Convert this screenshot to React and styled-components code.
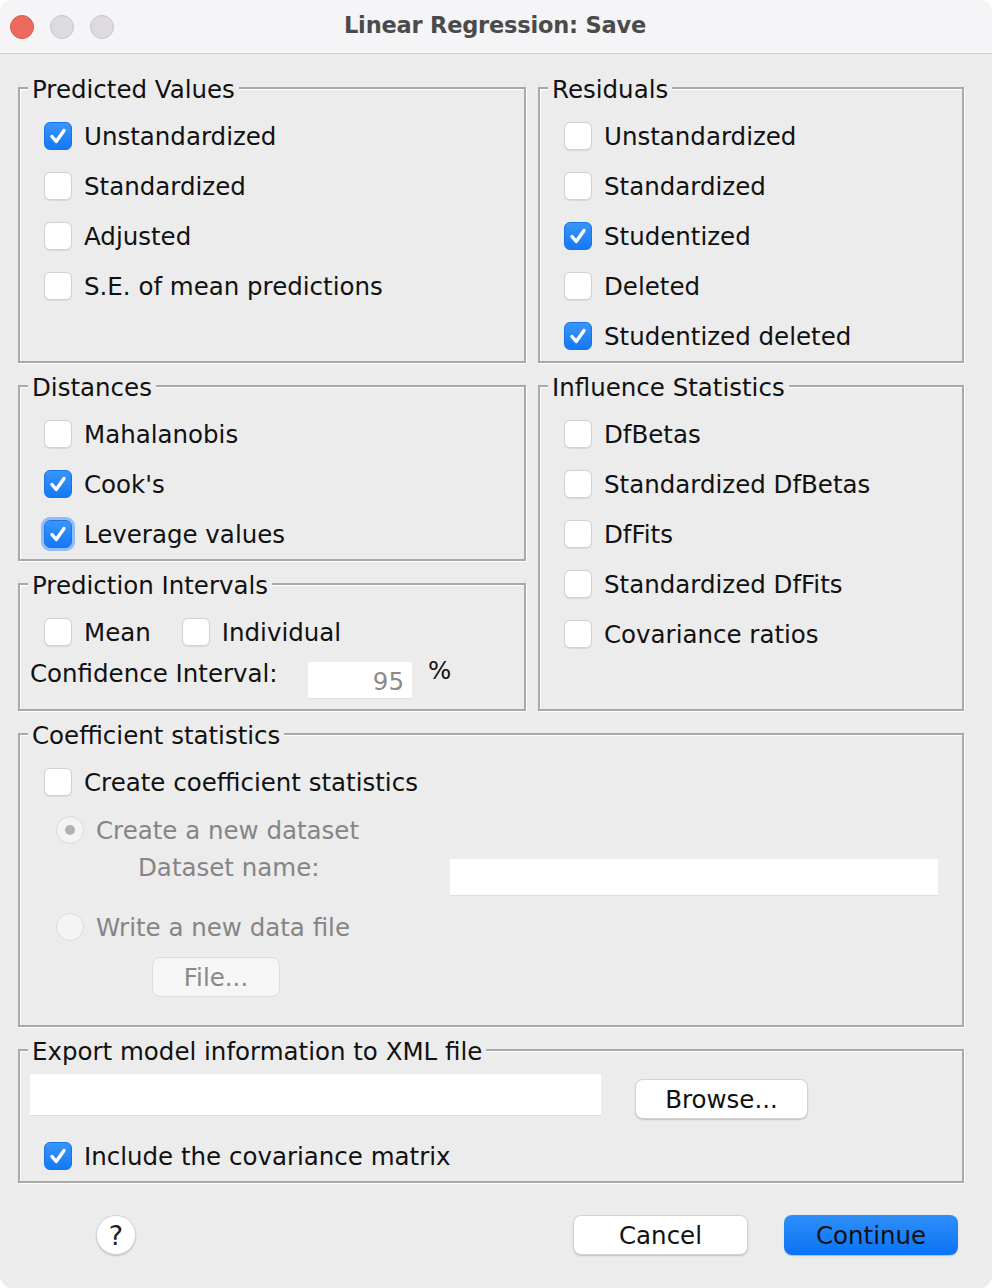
import React from 'react'
import styled, { createGlobalStyle, css } from 'styled-components'

const GlobalStyle = createGlobalStyle`
  html, body {
    margin: 0;
    padding: 0;
    background: #ffffff;
  }
  body {
    font-family: 'DejaVu Sans', 'Liberation Sans', sans-serif;
    color: #111111;
  }
`

const Window = styled.div`
  width: 992px;
  height: 1288px;
  box-sizing: border-box;
  background: #ececec;
  border-radius: 12px;
  overflow: hidden;
  display: flex;
  flex-direction: column;
`

const TitleBar = styled.div`
  height: 54px;
  flex-shrink: 0;
  background: #f5f4f6;
  border-bottom: 1px solid #cdcdcd;
  display: flex;
  align-items: center;
  padding-left: 10px;
  padding-bottom: 3px;
  box-sizing: border-box;
`

const Lights = styled.div`
  display: flex;
  gap: 16px;
  margin-top: 3px;
`

const Light = styled.span`
  width: 22px;
  height: 22px;
  border-radius: 50%;
  background: ${props => props.color};
  border: 1px solid ${props => props.edge};
`

const Title = styled.div`
  flex: 1;
  text-align: center;
  margin-right: 116px;
  font-size: 22.5px;
  font-weight: bold;
  color: #4b4b4b;
  letter-spacing: -0.2px;
`

const Body = styled.div`
  padding: 20px 28px 0 18px;
  display: grid;
  grid-template-columns: 508px 426px;
  grid-template-areas:
    'pred resid'
    'dist infl'
    'pint infl'
    'coef coef'
    'xml xml';
  column-gap: 12px;
  row-gap: 9px;
`

const Group = styled.fieldset`
  grid-area: ${props => props.area};
  margin: 0;
  padding: 9px 10px 0 10px;
  min-width: 0;
  border: 2px solid #a9a9a9;
  box-shadow: inset 1px 1px 0 #ffffff, 1px 1px 0 #ffffff;
  display: flex;
  flex-direction: column;
  padding-bottom: ${props => props.bottom || '0'};
`

const Legend = styled.legend`
  margin-left: -2px;
  padding: 4px 4px 0;
  box-sizing: border-box;
  height: 28px;
  line-height: 24px;
  font-size: 24.5px;
  background: #ececec;
  color: #111111;
`

const Row = styled.div`
  display: flex;
  align-items: center;
  height: ${props => props.height || '50px'};
  margin-left: ${props => props.indent || '14px'};
  gap: 12px;
  font-size: 24.5px;
  color: ${props => (props.disabled ? '#858585' : '#111111')};
`

const Box = styled.span`
  width: 28px;
  height: 28px;
  box-sizing: border-box;
  border-radius: 6px;
  flex-shrink: 0;
  display: flex;
  align-items: center;
  justify-content: center;
  ${props =>
    props.checked
      ? css`
          background: linear-gradient(#3a95fb, #1479f6);
          border: 1px solid #1a74e8;
        `
      : css`
          background: #ffffff;
          border: 1px solid #d2d2d2;
          box-shadow: 0 0.5px 1px rgba(0, 0, 0, 0.08);
        `}
  ${props =>
    props.focus &&
    css`
      box-shadow: 0 0 0 3px rgba(74, 150, 250, 0.55);
    `}
`

const Radio = styled.span`
  width: 28px;
  height: 28px;
  box-sizing: border-box;
  border-radius: 50%;
  background: #f4f4f4;
  border: 1px solid #dadada;
  flex-shrink: 0;
  display: flex;
  align-items: center;
  justify-content: center;
  &::after {
    content: '';
    width: 10px;
    height: 10px;
    border-radius: 50%;
    background: ${props => (props.selected ? '#b2b2b2' : 'transparent')};
  }
`

const Gap = styled.span`
  width: ${props => props.width};
  flex-shrink: 0;
`

const Field = styled.div`
  width: ${props => props.width};
  height: ${props => props.height || '37px'};
  margin-top: ${props => props.top || '0'};
  box-sizing: border-box;
  background: #ffffff;
  border-bottom: 1px solid #dedede;
  flex-shrink: 0;
  font-size: 24.5px;
  color: #8a8a8a;
  text-align: right;
  padding-right: 8px;
  line-height: 40px;
`

const FieldLabel = styled.span`
  width: ${props => props.width};
  flex-shrink: 0;
  font-size: 24.5px;
  line-height: ${props => props.lineHeight || 'normal'};
  color: ${props => (props.disabled ? '#858585' : '#111111')};
`

const FlatRow = styled.div`
  display: flex;
  align-items: ${props => props.align || 'center'};
  height: ${props => props.height};
  margin-left: ${props => props.indent || '0'};
  margin-top: ${props => props.top || '0'};
`

const Percent = styled.span`
  font-size: 24.5px;
  line-height: 28px;
  margin-left: 16px;
`

const Button = styled.button`
  width: ${props => props.width};
  height: 40px;
  margin-top: ${props => props.top || '0'};
  margin-left: ${props => props.left || '0'};
  border-radius: 8px;
  font-family: inherit;
  font-size: 24.5px;
  flex-shrink: 0;
  padding: 0;
  ${props =>
    props.primary
      ? css`
          background: linear-gradient(#2e8ff9, #0a73f6);
          border: none;
          color: #111111;
          box-shadow: 0 0.5px 1px rgba(0, 0, 0, 0.2);
        `
      : props.disabled
      ? css`
          background: #f6f6f6;
          border: 1px solid #dcdcdc;
          color: #8a8a8a;
        `
      : css`
          background: #ffffff;
          border: 1px solid #d3d3d3;
          color: #111111;
          box-shadow: 0 1px 1.5px rgba(0, 0, 0, 0.18);
        `}
`

const Footer = styled.div`
  display: flex;
  align-items: center;
  padding: 32px 34px 0 96px;
`

const Help = styled.button`
  width: 40px;
  height: 40px;
  border-radius: 50%;
  background: #ffffff;
  border: 1px solid #d5d5d5;
  box-shadow: 0 1px 1.5px rgba(0, 0, 0, 0.18);
  font-family: inherit;
  font-size: 27px;
  color: #222222;
  padding: 0;
  margin-right: auto;
`

const Actions = styled.div`
  display: flex;
  gap: 36px;
`

function Check({ checked, focus }) {
  return (
    <Box checked={checked} focus={focus}>
      {checked && (
        <svg width="22" height="22" viewBox="0 0 22 22">
          <path
            d="M5 11.5 L9.2 16.5 L17 5.5"
            fill="none"
            stroke="#ffffff"
            strokeWidth="3.4"
            strokeLinecap="round"
            strokeLinejoin="round"
          />
        </svg>
      )}
    </Box>
  )
}

function Option({ label, checked, focus }) {
  return (
    <Row>
      <Check checked={checked} focus={focus} />
      <span>{label}</span>
    </Row>
  )
}

export default function App() {
  return (
    <>
      <GlobalStyle />
      <Window>
        <TitleBar>
          <Lights>
            <Light color="#ec6a5e" edge="#d55b50" />
            <Light color="#dddbde" edge="#c8c6c9" />
            <Light color="#dddbde" edge="#c8c6c9" />
          </Lights>
          <Title>Linear Regression: Save</Title>
        </TitleBar>
        <Body>
          <Group area="pred">
            <Legend>Predicted Values</Legend>
            <Option label="Unstandardized" checked />
            <Option label="Standardized" />
            <Option label="Adjusted" />
            <Option label="S.E. of mean predictions" />
          </Group>
          <Group area="resid">
            <Legend>Residuals</Legend>
            <Option label="Unstandardized" />
            <Option label="Standardized" />
            <Option label="Studentized" checked />
            <Option label="Deleted" />
            <Option label="Studentized deleted" checked />
          </Group>
          <Group area="dist">
            <Legend>Distances</Legend>
            <Option label="Mahalanobis" />
            <Option label="Cook's" checked />
            <Option label="Leverage values" checked focus />
          </Group>
          <Group area="infl">
            <Legend>Influence Statistics</Legend>
            <Option label="DfBetas" />
            <Option label="Standardized DfBetas" />
            <Option label="DfFits" />
            <Option label="Standardized DfFits" />
            <Option label="Covariance ratios" />
          </Group>
          <Group area="pint" bottom="6px">
            <Legend>Prediction Intervals</Legend>
            <Row>
              <Check />
              <span>Mean</span>
              <Gap width="7px" />
              <Check />
              <span>Individual</span>
            </Row>
            <FlatRow height="46px" align="flex-start">
              <FieldLabel width="278px" lineHeight="34px">
                Confidence Interval:
              </FieldLabel>
              <Field width="104px" top="5px">
                95
              </Field>
              <Percent>%</Percent>
            </FlatRow>
          </Group>
          <Group area="coef" bottom="28px">
            <Legend>Coefficient statistics</Legend>
            <Option label="Create coefficient statistics" />
            <Row indent="26px" height="46px" disabled>
              <Radio selected />
              <span>Create a new dataset</span>
            </Row>
            <FlatRow height="46px" align="flex-start" indent="108px">
              <FieldLabel width="312px" lineHeight="30px" disabled>
                Dataset name:
              </FieldLabel>
              <Field width="488px" top="6px" />
            </FlatRow>
            <Row indent="26px" height="56px" disabled>
              <Radio />
              <span>Write a new data file</span>
            </Row>
            <FlatRow indent="122px" top="2px">
              <Button width="128px" disabled>
                File...
              </Button>
            </FlatRow>
          </Group>
          <Group area="xml">
            <Legend>Export model information to XML file</Legend>
            <FlatRow height="45px" align="flex-start" top="1px">
              <Field width="571px" height="42px" />
              <Button width="173px" left="34px" top="5px">
                Browse...
              </Button>
            </FlatRow>
            <FlatRow top="12px">
              <Option label="Include the covariance matrix" checked />
            </FlatRow>
          </Group>
        </Body>
        <Footer>
          <Help>?</Help>
          <Actions>
            <Button width="175px">Cancel</Button>
            <Button width="174px" primary>
              Continue
            </Button>
          </Actions>
        </Footer>
      </Window>
    </>
  )
}
